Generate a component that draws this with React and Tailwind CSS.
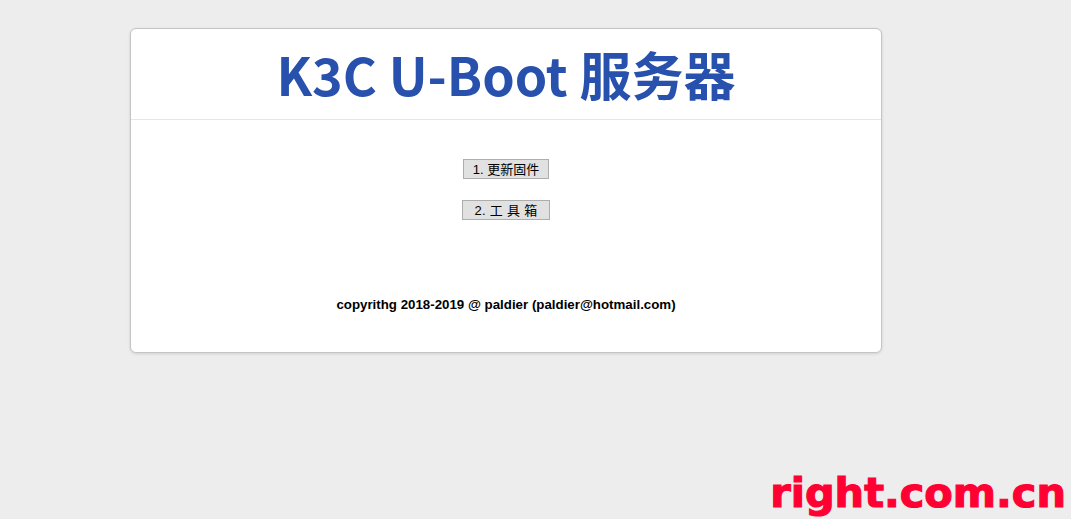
export default function App() {
  return (
    <div className="relative min-h-[519px] w-full overflow-hidden bg-[#ededed] pt-[28px]">
      <div className="ml-[130px] w-[752px] rounded-[6px] border border-[#c4c4c4] bg-white shadow-[0_1px_3px_rgba(0,0,0,0.12)]">
        <div className="flex h-[91px] items-center justify-center border-b border-[#e6e6e6]">
          <h1 className="font-['Noto_Sans_CJK_SC','Noto_Sans',sans-serif] text-[52px] font-bold leading-none text-[#2850ad]">
            K3C U-Boot 服务器
          </h1>
        </div>
        <div className="flex flex-col items-center pt-[39px] pb-[39px] font-['Liberation_Sans','Noto_Sans_CJK_SC',sans-serif]">
          <button
            type="button"
            className="h-[20px] border border-[#adadad] bg-[#e1e1e1] px-[9px] text-[13px] leading-none text-black"
          >
            1. 更新固件
          </button>
          <button
            type="button"
            className="mt-[21px] h-[20px] border border-[#adadad] bg-[#e1e1e1] px-[11px] text-[13px] leading-none tracking-[0.3px] text-black"
          >
            2. 工 具 箱
          </button>
          <p className="mt-[77px] font-['Liberation_Sans',Arial,sans-serif] text-[13.3px] font-bold leading-[16px] text-black">
            copyrithg 2018-2019 @ paldier (paldier@hotmail.com)
          </p>
        </div>
      </div>
      <div className="absolute bottom-[6px] right-[5px] font-['DejaVu_Sans',sans-serif] text-[41.5px] font-bold leading-none text-[#ff0033] [-webkit-text-stroke:1.2px_#ff0033]">
        right.com.cn
      </div>
    </div>
  );
}
